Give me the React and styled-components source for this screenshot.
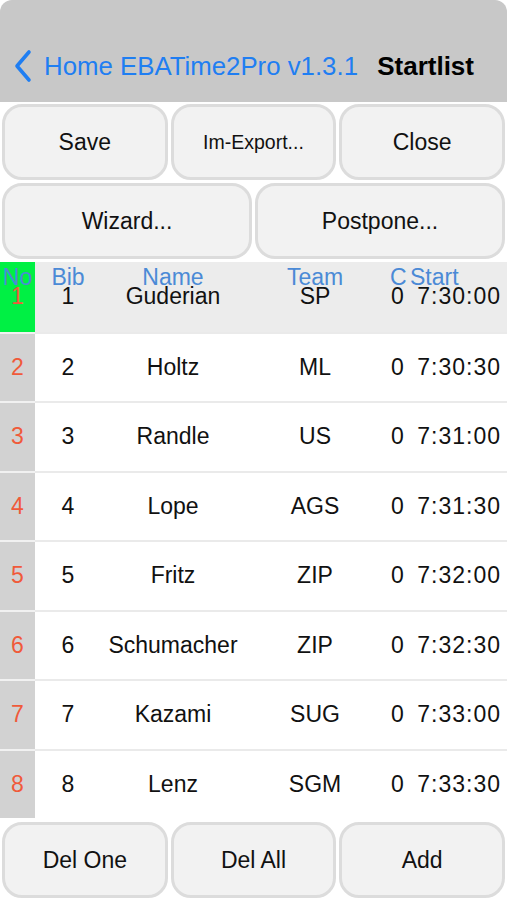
import React from 'react';
import styled, { createGlobalStyle } from 'styled-components';

const racers = [
  { bib: 1, name: 'Guderian', team: 'SP', c: 0, start: '7:30:00' },
  { bib: 2, name: 'Holtz', team: 'ML', c: 0, start: '7:30:30' },
  { bib: 3, name: 'Randle', team: 'US', c: 0, start: '7:31:00' },
  { bib: 4, name: 'Lope', team: 'AGS', c: 0, start: '7:31:30' },
  { bib: 5, name: 'Fritz', team: 'ZIP', c: 0, start: '7:32:00' },
  { bib: 6, name: 'Schumacher', team: 'ZIP', c: 0, start: '7:32:30' },
  { bib: 7, name: 'Kazami', team: 'SUG', c: 0, start: '7:33:00' },
  { bib: 8, name: 'Lenz', team: 'SGM', c: 0, start: '7:33:30' },
];

export default function App() {
  return (
    <Page>
      <GlobalStyle />
      <NavBar>
        <BackLink>
          <svg width="20" height="34" viewBox="0 0 20 34">
            <path d="M16 3 L4 17 L16 31" fill="none" stroke="#1f7ef2" strokeWidth="3.6" strokeLinecap="round" strokeLinejoin="round" />
          </svg>
          <span>Home EBATime2Pro v1.3.1</span>
        </BackLink>
        <NavTitle>Startlist</NavTitle>
      </NavBar>

      <ButtonGrid $cols={3}>
        <Button>Save</Button>
        <Button $small>Im-Export...</Button>
        <Button>Close</Button>
      </ButtonGrid>
      <ButtonGrid $cols={2}>
        <Button>Wizard...</Button>
        <Button>Postpone...</Button>
      </ButtonGrid>

      <Table>
        <HeaderRow>
          <HeadCell>No</HeadCell>
          <HeadCell>Bib</HeadCell>
          <HeadCell>Name</HeadCell>
          <HeadCell>Team</HeadCell>
          <HeadCell $left>C Start</HeadCell>
        </HeaderRow>
        {racers.map((r, i) => (
          <Row key={r.bib}>
            <NoCell $active={i === 0} $first={i === 0}>{i + 1}</NoCell>
            <Cells $active={i === 0} $first={i === 0}>
              <Cell>{r.bib}</Cell>
              <Cell>{r.name}</Cell>
              <Cell>{r.team}</Cell>
              <Cell>{r.c}</Cell>
              <TimeCell>{r.start}</TimeCell>
            </Cells>
          </Row>
        ))}
      </Table>

      <ButtonGrid $cols={3} $bottom>
        <Button>Del One</Button>
        <Button>Del All</Button>
        <Button>Add</Button>
      </ButtonGrid>
    </Page>
  );
}

const GlobalStyle = createGlobalStyle`
  html, body {
    margin: 0;
    padding: 0;
    background: #ffffff;
    font-family: "Liberation Sans", Arial, sans-serif;
  }
  * { box-sizing: border-box; }
`;

const Page = styled.div`
  width: 507px;
  height: 900px;
  display: flex;
  flex-direction: column;
  background: #ffffff;
  overflow: hidden;
`;

const NavBar = styled.header`
  height: 102px;
  flex-shrink: 0;
  background: #c8c8c8;
  border-radius: 12px 12px 0 0;
  display: flex;
  align-items: flex-end;
  justify-content: space-between;
  padding: 0 33px 19px 13px;
`;

const BackLink = styled.div`
  display: flex;
  align-items: center;
  gap: 11px;
  color: #1f7ef2;
  font-size: 25.8px;
  line-height: 30px;
`;

const NavTitle = styled.div`
  color: #000;
  font-weight: bold;
  font-size: 26px;
  line-height: 30px;
  padding-bottom: 2px;
`;

const ButtonGrid = styled.div`
  display: grid;
  grid-template-columns: repeat(${(p) => p.$cols}, 1fr);
  gap: 3px;
  padding: ${(p) => (p.$bottom ? '4px 2px 2px' : '2px 2px 1px')};
  height: ${(p) => (p.$bottom ? '82px' : '79px')};
  flex-shrink: 0;
`;

const Button = styled.button`
  background: #f2f2f2;
  border: 3px solid #dcdcdc;
  border-radius: 20px;
  color: #111;
  font-family: inherit;
  font-size: ${(p) => (p.$small ? '19.5px' : '23px')};
  padding: 0;
  cursor: pointer;
`;

const Table = styled.div`
  position: relative;
  margin-top: 2px;
  display: flex;
  flex-direction: column;
  height: 556px;
  flex-shrink: 0;
`;

const HeaderRow = styled.div`
  position: absolute;
  top: 0;
  left: 0;
  right: 0;
  height: 30px;
  display: grid;
  grid-template-columns: 35px 66px 144px 140px 1fr;
  align-items: center;
  color: #4b8ad6;
  font-size: 23px;
  z-index: 2;
`;

const HeadCell = styled.div`
  text-align: ${(p) => (p.$left ? 'left' : 'center')};
  padding-left: ${(p) => (p.$left ? '5px' : '0')};
  line-height: 30px;
  ${(p) => (p.$left ? 'word-spacing: -3px;' : '')}
`;

const Row = styled.div`
  flex: 1;
  display: grid;
  grid-template-columns: 35px 1fr;
`;

const NoCell = styled.div`
  background: ${(p) => (p.$active ? '#00f044' : '#d2d2d2')};
  border-top: ${(p) => (p.$first ? 'none' : '2px solid #f1f1f1')};
  color: #f05a3a;
  font-size: 23px;
  display: flex;
  align-items: center;
  justify-content: center;
`;

const Cells = styled.div`
  background: ${(p) => (p.$active ? '#ececec' : '#ffffff')};
  border-top: ${(p) => (p.$first ? 'none' : '2px solid #eaeaea')};
  display: grid;
  grid-template-columns: 66px 144px 140px 25px 1fr;
  align-items: center;
  color: #111;
  font-size: 23px;
`;

const Cell = styled.div`
  text-align: center;
`;

const TimeCell = styled.div`
  text-align: right;
  padding-right: 6px;
  letter-spacing: 1px;
`;
